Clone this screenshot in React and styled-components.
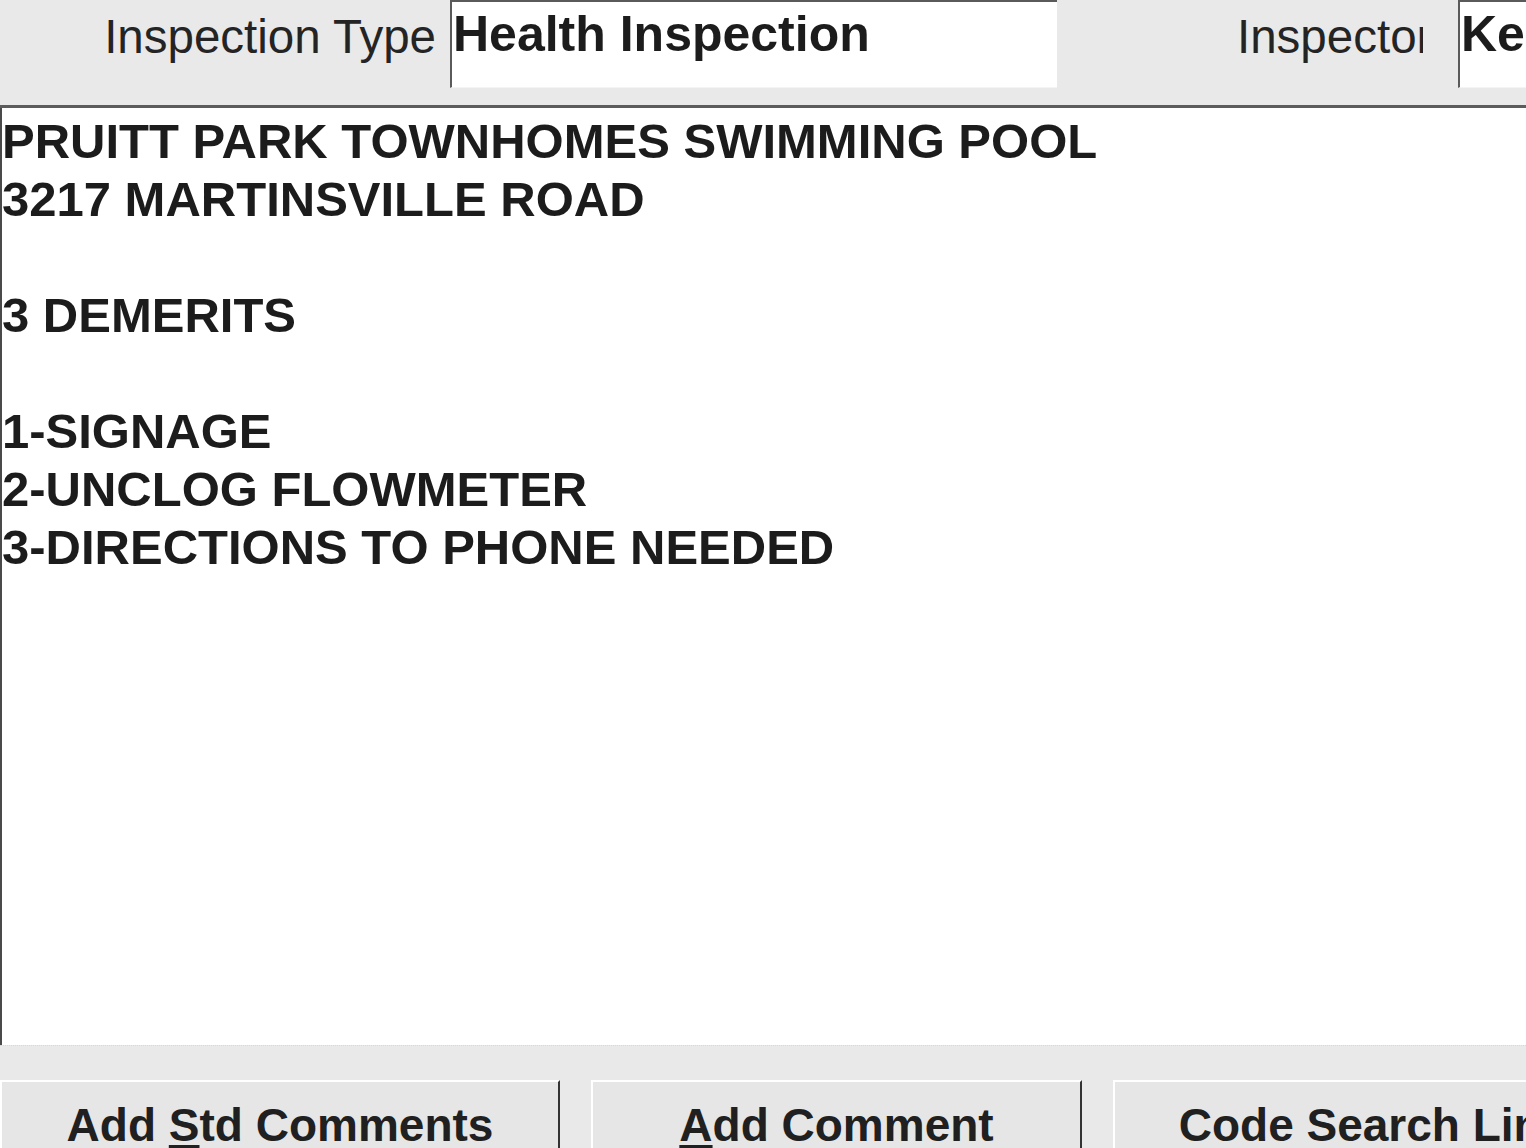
import styled, { createGlobalStyle } from 'styled-components';

const Global = createGlobalStyle`
  html, body {
    margin: 0;
    padding: 0;
    overflow: hidden;
  }
  body {
    font-family: 'Liberation Sans', Arial, sans-serif;
    color: #1e1e1e;
  }
`;

const lines = [
  'PRUITT PARK TOWNHOMES SWIMMING POOL',
  '3217 MARTINSVILLE ROAD',
  '',
  '3 DEMERITS',
  '',
  '1-SIGNAGE',
  '2-UNCLOG FLOWMETER',
  '3-DIRECTIONS TO PHONE NEEDED',
];

const App = () => {
  return (
    <Screen>
      <Global />
      <Header>
        <Label width='436px' align='right'>Inspection Type</Label>
        <Field width='607px' offset='14px'>Health Inspection</Field>
        <Label width='186px' offset='180px'>Inspector</Label>
        <Field offset='35px' grow>Ke</Field>
      </Header>
      <Notes>
        {lines.map((line, i) => (
          <NoteLine key={i}>{line || '\u00a0'}</NoteLine>
        ))}
      </Notes>
      <Footer>
        <Button width='560px'>
          Add <u>S</u>td Comments
        </Button>
        <Button width='491px'>
          <u>A</u>dd Comment
        </Button>
        <Button width='520px'>Code Search Link</Button>
      </Footer>
    </Screen>
  );
};

const Screen = styled.div`
  width: 1526px;
  height: 1148px;
  display: flex;
  flex-direction: column;
  overflow: hidden;
  background: #e9e9e9;
`;

const Header = styled.div`
  height: 105px;
  display: flex;
  align-items: flex-start;
  background: #e9e9e9;
  border-bottom: 3px solid #5c5c5c;
  flex-shrink: 0;
`;

const Label = styled.div`
  width: ${(p) => p.width};
  margin-left: ${(p) => p.offset || '0'};
  flex-shrink: 0;
  padding: 13px 0 14px;
  font-size: 47.5px;
  line-height: 48px;
  text-align: ${(p) => p.align || 'left'};
  white-space: nowrap;
  overflow: hidden;
  color: #242424;
`;

const Field = styled.div`
  width: ${(p) => p.width || 'auto'};
  flex: ${(p) => (p.grow ? '1' : '0 0 auto')};
  margin-left: ${(p) => p.offset || '0'};
  height: 88px;
  padding: 7px 0 0 1px;
  box-sizing: border-box;
  background: #fff;
  border-top: 2px solid #5a5a5a;
  border-left: 2px solid #5a5a5a;
  border-bottom: 1px solid #f4f4f4;
  font-size: 50px;
  line-height: 50px;
  font-weight: bold;
  white-space: nowrap;
  overflow: hidden;
  color: #1c1c1c;
`;

const Notes = styled.div`
  flex: 1;
  background: #fff;
  border-left: 2px solid #4a4a4a;
  padding: 4px 0 0 0;
`;

const NoteLine = styled.div`
  font-size: 49px;
  line-height: 58px;
  font-weight: bold;
  white-space: pre;
  color: #1c1c1c;
`;

const Footer = styled.div`
  height: 103px;
  flex-shrink: 0;
  box-sizing: border-box;
  padding-top: 34px;
  display: flex;
  gap: 31px;
  background: #e9e9e9;
  border-top: 1px dotted #d8d8d8;
`;

const Button = styled.div`
  width: ${(p) => p.width};
  flex-shrink: 0;
  box-sizing: border-box;
  padding-top: 20px;
  border-top: 2px solid #fff;
  border-left: 2px solid #fff;
  border-right: 2px solid #333;
  background: #e6e6e6;
  text-align: center;
  font-size: 46px;
  line-height: 46px;
  font-weight: bold;
  white-space: nowrap;
  color: #202020;

  u {
    text-decoration-thickness: 3px;
    text-underline-offset: 4px;
  }
`;

export default App;
